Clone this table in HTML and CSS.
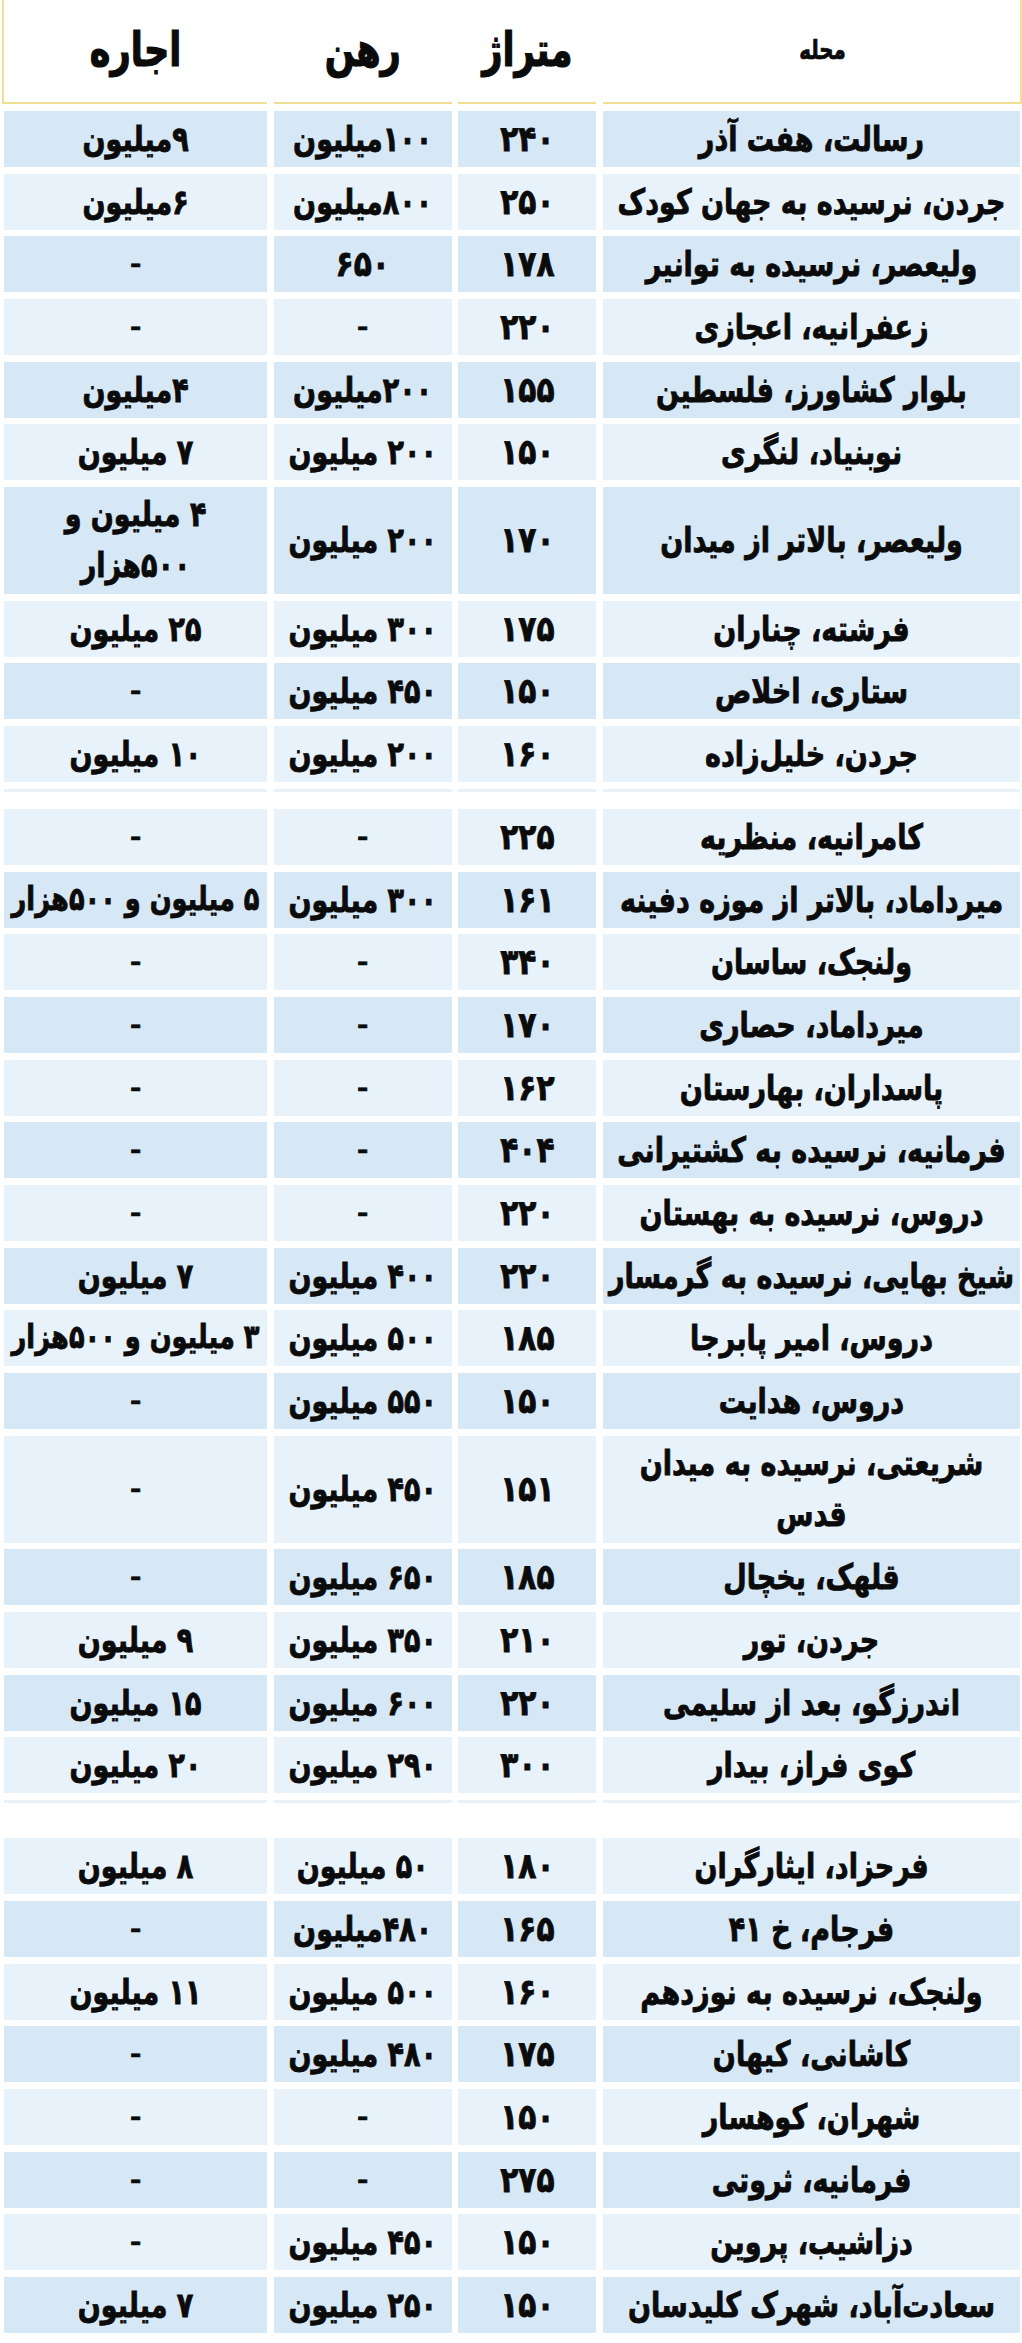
FILE: index.html
```html
<!DOCTYPE html>
<html lang="fa" dir="rtl">
<head>
<meta charset="utf-8">
<title>جدول اجاره و رهن</title>
<link rel="stylesheet" href="styles.css">
</head>
<body>
<div class="page">
  <div class="head">
    <div class="hc hc-small"><span>محله</span></div>
    <div class="hc"><span>متراژ</span></div>
    <div class="hc"><span>رهن</span></div>
    <div class="hc"><span>اجاره</span></div>
  </div>

  <div class="section s1">
    <div class="row dark"><div class="c"><span>رسالت، هفت آذر</span></div><div class="c num"><span>۲۴۰</span></div><div class="c"><span>۱۰۰میلیون</span></div><div class="c"><span>۹میلیون</span></div></div>
    <div class="row light"><div class="c"><span>جردن، نرسیده به جهان کودک</span></div><div class="c num"><span>۲۵۰</span></div><div class="c"><span>۸۰۰میلیون</span></div><div class="c"><span>۶میلیون</span></div></div>
    <div class="row dark"><div class="c"><span>ولیعصر، نرسیده به توانیر</span></div><div class="c num"><span>۱۷۸</span></div><div class="c num"><span>۶۵۰</span></div><div class="c dash"><span>–</span></div></div>
    <div class="row light"><div class="c"><span>زعفرانیه، اعجازی</span></div><div class="c num"><span>۲۲۰</span></div><div class="c dash"><span>–</span></div><div class="c dash"><span>–</span></div></div>
    <div class="row dark"><div class="c"><span>بلوار کشاورز، فلسطین</span></div><div class="c num"><span>۱۵۵</span></div><div class="c"><span>۲۰۰میلیون</span></div><div class="c"><span>۴میلیون</span></div></div>
    <div class="row light"><div class="c"><span>نوبنیاد، لنگری</span></div><div class="c num"><span>۱۵۰</span></div><div class="c"><span>۲۰۰ میلیون</span></div><div class="c"><span>۷ میلیون</span></div></div>
    <div class="row dark tall"><div class="c"><span>ولیعصر، بالاتر از میدان</span></div><div class="c num"><span>۱۷۰</span></div><div class="c"><span>۲۰۰ میلیون</span></div><div class="c"><span>۴ میلیون و<br>۵۰۰هزار</span></div></div>
    <div class="row light"><div class="c"><span>فرشته، چناران</span></div><div class="c num"><span>۱۷۵</span></div><div class="c"><span>۳۰۰ میلیون</span></div><div class="c"><span>۲۵ میلیون</span></div></div>
    <div class="row dark"><div class="c"><span>ستاری، اخلاص</span></div><div class="c num"><span>۱۵۰</span></div><div class="c"><span>۴۵۰ میلیون</span></div><div class="c dash"><span>–</span></div></div>
    <div class="row light"><div class="c"><span>جردن، خلیل‌زاده</span></div><div class="c num"><span>۱۶۰</span></div><div class="c"><span>۲۰۰ میلیون</span></div><div class="c"><span>۱۰ میلیون</span></div></div>
    <div class="row light strip"><div class="c"></div><div class="c"></div><div class="c"></div><div class="c"></div></div>
  </div>

  <div class="section s2">
    <div class="row light"><div class="c"><span>کامرانیه، منظریه</span></div><div class="c num"><span>۲۲۵</span></div><div class="c dash"><span>–</span></div><div class="c dash"><span>–</span></div></div>
    <div class="row dark"><div class="c"><span>میرداماد، بالاتر از موزه دفینه</span></div><div class="c num"><span>۱۶۱</span></div><div class="c"><span>۳۰۰ میلیون</span></div><div class="c tight"><span>۵ میلیون و ۵۰۰هزار</span></div></div>
    <div class="row light"><div class="c"><span>ولنجک، ساسان</span></div><div class="c num"><span>۳۴۰</span></div><div class="c dash"><span>–</span></div><div class="c dash"><span>–</span></div></div>
    <div class="row dark"><div class="c"><span>میرداماد، حصاری</span></div><div class="c num"><span>۱۷۰</span></div><div class="c dash"><span>–</span></div><div class="c dash"><span>–</span></div></div>
    <div class="row light"><div class="c"><span>پاسداران، بهارستان</span></div><div class="c num"><span>۱۶۲</span></div><div class="c dash"><span>–</span></div><div class="c dash"><span>–</span></div></div>
    <div class="row dark"><div class="c"><span>فرمانیه، نرسیده به کشتیرانی</span></div><div class="c num"><span>۴۰۴</span></div><div class="c dash"><span>–</span></div><div class="c dash"><span>–</span></div></div>
    <div class="row light"><div class="c"><span>دروس، نرسیده به بهستان</span></div><div class="c num"><span>۲۲۰</span></div><div class="c dash"><span>–</span></div><div class="c dash"><span>–</span></div></div>
    <div class="row dark"><div class="c"><span>شیخ بهایی، نرسیده به گرمسار</span></div><div class="c num"><span>۲۲۰</span></div><div class="c"><span>۴۰۰ میلیون</span></div><div class="c"><span>۷ میلیون</span></div></div>
    <div class="row light"><div class="c"><span>دروس، امیر پابرجا</span></div><div class="c num"><span>۱۸۵</span></div><div class="c"><span>۵۰۰ میلیون</span></div><div class="c tight"><span>۳ میلیون و ۵۰۰هزار</span></div></div>
    <div class="row dark"><div class="c"><span>دروس، هدایت</span></div><div class="c num"><span>۱۵۰</span></div><div class="c"><span>۵۵۰ میلیون</span></div><div class="c dash"><span>–</span></div></div>
    <div class="row light tall"><div class="c"><span>شریعتی، نرسیده به میدان<br>قدس</span></div><div class="c num"><span>۱۵۱</span></div><div class="c"><span>۴۵۰ میلیون</span></div><div class="c dash"><span>–</span></div></div>
    <div class="row dark"><div class="c"><span>قلهک، یخچال</span></div><div class="c num"><span>۱۸۵</span></div><div class="c"><span>۶۵۰ میلیون</span></div><div class="c dash"><span>–</span></div></div>
    <div class="row light"><div class="c"><span>جردن، تور</span></div><div class="c num"><span>۲۱۰</span></div><div class="c"><span>۳۵۰ میلیون</span></div><div class="c"><span>۹ میلیون</span></div></div>
    <div class="row dark"><div class="c"><span>اندرزگو، بعد از سلیمی</span></div><div class="c num"><span>۲۲۰</span></div><div class="c"><span>۶۰۰ میلیون</span></div><div class="c"><span>۱۵ میلیون</span></div></div>
    <div class="row light"><div class="c"><span>کوی فراز، بیدار</span></div><div class="c num"><span>۳۰۰</span></div><div class="c"><span>۲۹۰ میلیون</span></div><div class="c"><span>۲۰ میلیون</span></div></div>
    <div class="row light strip"><div class="c"></div><div class="c"></div><div class="c"></div><div class="c"></div></div>
  </div>

  <div class="section s3">
    <div class="row light"><div class="c"><span>فرحزاد، ایثارگران</span></div><div class="c num"><span>۱۸۰</span></div><div class="c"><span>۵۰ میلیون</span></div><div class="c"><span>۸ میلیون</span></div></div>
    <div class="row dark"><div class="c"><span>فرجام، خ ۴۱</span></div><div class="c num"><span>۱۶۵</span></div><div class="c"><span>۴۸۰میلیون</span></div><div class="c dash"><span>–</span></div></div>
    <div class="row light"><div class="c"><span>ولنجک، نرسیده به نوزدهم</span></div><div class="c num"><span>۱۶۰</span></div><div class="c"><span>۵۰۰ میلیون</span></div><div class="c"><span>۱۱ میلیون</span></div></div>
    <div class="row dark"><div class="c"><span>کاشانی، کیهان</span></div><div class="c num"><span>۱۷۵</span></div><div class="c"><span>۴۸۰ میلیون</span></div><div class="c dash"><span>–</span></div></div>
    <div class="row light"><div class="c"><span>شهران، کوهسار</span></div><div class="c num"><span>۱۵۰</span></div><div class="c dash"><span>–</span></div><div class="c dash"><span>–</span></div></div>
    <div class="row dark"><div class="c"><span>فرمانیه، ثروتی</span></div><div class="c num"><span>۲۷۵</span></div><div class="c dash"><span>–</span></div><div class="c dash"><span>–</span></div></div>
    <div class="row light"><div class="c"><span>دزاشیب، پروین</span></div><div class="c num"><span>۱۵۰</span></div><div class="c"><span>۴۵۰ میلیون</span></div><div class="c dash"><span>–</span></div></div>
    <div class="row dark"><div class="c"><span>سعادت‌آباد، شهرک کلیدسان</span></div><div class="c num"><span>۱۵۰</span></div><div class="c"><span>۲۵۰ میلیون</span></div><div class="c"><span>۷ میلیون</span></div></div>
  </div>
</div>
</body>
</html>
```
FILE: styles.css
```css
html, body {
  margin: 0;
  padding: 0;
  background: #ffffff;
}
body {
  font-family: "DejaVu Sans Condensed", "DejaVu Sans", sans-serif;
  font-stretch: condensed;
  font-weight: bold;
  color: #0b0b0b;
  direction: rtl;
  -webkit-text-stroke: 0.7px #0b0b0b;
}
.page {
  width: 1016px;
  padding: 0 2px 0 4px;
  display: flex;
  flex-direction: column;
}
.head, .row {
  display: grid;
  grid-template-columns: 417px 138px 178px 263px;
  column-gap: 6.67px;
}
.head {
  height: 104px;
  margin: 0 -2px 0 -2px;
  border-left: 2px solid #f1df93;
  border-right: 2px solid #f1df93;
  background: #ffffff;
}
.hc {
  display: flex;
  align-items: center;
  justify-content: center;
  font-size: 39px;
  border-bottom: 2px solid #f1df93;
  padding-bottom: 4px;
  -webkit-text-stroke: 1px #0b0b0b;
}
.hc span {
  display: inline-block;
  transform: scaleY(1.2);
}
.hc-small {
  font-size: 22px;
  padding-left: 22px;
  -webkit-text-stroke: 0.6px #0b0b0b;
}
.section {
  display: flex;
  flex-direction: column;
  row-gap: 6.67px;
}
.s1 { margin-top: 7px; }
.s2 { margin-top: 17px; }
.s3 { margin-top: 35px; }
.row {
  height: 56px;
}
.row.tall {
  height: 107px;
}
.row.strip {
  height: 3.5px;
}
.c {
  display: flex;
  align-items: center;
  justify-content: center;
  text-align: center;
  white-space: nowrap;
  font-size: 30px;
  line-height: 44px;
}
.c span {
  display: inline-block;
  transform: scaleY(1.16);
}
.c.num {
  font-size: 33px;
}
.c.num span {
  transform: scaleY(1.08);
}
.c.tight {
  font-size: 28.5px;
}
.dark .c { background: #d6e7f6; }
.light .c { background: #e8f2fb; }
.c.dash {
  font-size: 24px;
}
.c.dash span {
  transform: none;
}
```
